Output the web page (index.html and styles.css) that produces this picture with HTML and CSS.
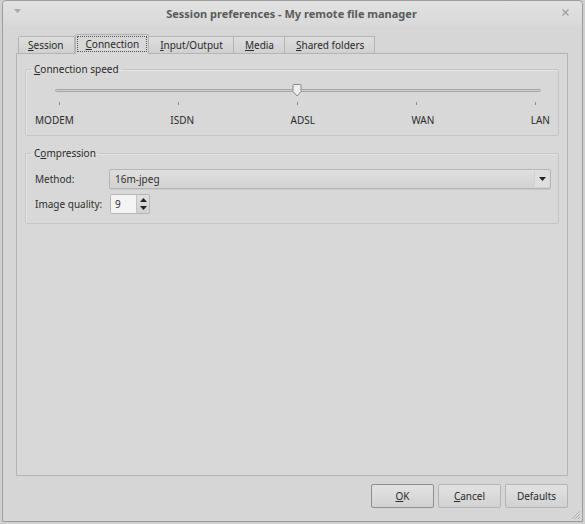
FILE: index.html
```html
<!DOCTYPE html>
<html>
<head>
<meta charset="utf-8">
<link rel="stylesheet" href="styles.css">
</head>
<body>
<div class="window">
  <div class="titlebar">
    <svg class="menu-arrow" width="9" height="6" viewBox="0 0 9 6"><path d="M1 1 L8 1 L4.5 5 Z" fill="#a8a8a8"/></svg>
    <span class="title">Session preferences - My remote file manager</span>
    <svg class="close" width="9" height="9" viewBox="0 0 9 9"><path d="M1.5 1.5 L7.5 7.5 M7.5 1.5 L1.5 7.5" stroke="#a0a0a0" stroke-width="1.4"/></svg>
  </div>
  <div class="content">
    <div class="tabs">
      <div class="tab first"><u>S</u>ession</div>
      <div class="tab active"><span class="focus"><u>C</u>onnection</span></div>
      <div class="tab"><u>I</u>nput/Output</div>
      <div class="tab"><u>M</u>edia</div>
      <div class="tab"><u>S</u>hared folders</div>
    </div>
    <div class="panel">
      <fieldset class="group speed">
        <legend><u>C</u>onnection speed</legend>
        <div class="slider">
          <div class="groove"></div>
          <svg class="handle" width="10" height="13" viewBox="0 0 10 13"><path d="M1 1.5 Q1 0.5 2 0.5 L8 0.5 Q9 0.5 9 1.5 L9 7.5 L5 12 L1 7.5 Z" fill="#eeeeee" stroke="#8a8a8a"/></svg>
        </div>
        <div class="ticks"><i></i><i></i><i></i><i></i><i></i></div>
        <div class="labels"><span>MODEM</span><span>ISDN</span><span>ADSL</span><span>WAN</span><span>LAN</span></div>
      </fieldset>
      <fieldset class="group compression">
        <legend>C<u>o</u>mpression</legend>
        <div class="row">
          <span class="lbl">Method:</span>
          <div class="combo"><span>16m-jpeg</span><span class="drop"><svg width="7" height="4" viewBox="0 0 7 4"><path d="M0 0 L7 0 L3.5 4 Z" fill="#222"/></svg></span></div>
        </div>
        <div class="row">
          <span class="lbl">Image quality:</span>
          <div class="spin"><span class="field">9</span><span class="arrows"><svg width="7" height="4" viewBox="0 0 7 4"><path d="M0 4 L7 4 L3.5 0 Z" fill="#222"/></svg><svg width="7" height="4" viewBox="0 0 7 4"><path d="M0 0 L7 0 L3.5 4 Z" fill="#222"/></svg></span></div>
        </div>
      </fieldset>
    </div>
    <div class="buttons">
      <button class="btn default"><u>O</u>K</button>
      <button class="btn"><u>C</u>ancel</button>
      <button class="btn">Defaults</button>
    </div>
  </div>
  <svg class="grip" width="12" height="12" viewBox="0 0 12 12"><path d="M11 3 L3 11 M11 6 L6 11 M11 9 L9 11" stroke="#b0b0b0" stroke-width="1"/></svg>
</div>
</body>
</html>
```
FILE: styles.css
```css
* { box-sizing: border-box; }
html, body { margin: 0; padding: 0; background: #d0d0d0; }
body {
  font-family: "Noto Sans", "Open Sans", sans-serif;
  font-size: 10px;
  color: #2e2e2e;
  width: 585px;
  height: 524px;
  overflow: hidden;
}
u { text-decoration: underline; text-underline-offset: 1px; }
.window {
  position: relative;
  margin-left: 2px;
  width: 581px;
  height: 522px;
  border: 1px solid #9c9c9c;
  border-radius: 4px 4px 0 0;
  background: #d6d6d6;
  display: flex;
  flex-direction: column;
}
.titlebar {
  height: 24px;
  display: flex;
  align-items: center;
  justify-content: space-between;
  padding: 0 12px 0 10px;
  background: linear-gradient(#e2e2e2, #d9d9d9);
  border-radius: 4px 4px 0 0;
}
.title {
  font-weight: bold;
  font-size: 11px;
  color: #5a5a5a;
}
.menu-arrow { margin-top: -4px; }
.close { margin-top: -2px; }
.content {
  flex: 1;
  display: flex;
  flex-direction: column;
  padding: 9px 14px 13px 13px;
}
.tabs {
  display: flex;
  align-items: flex-end;
  height: 19px;
  padding-left: 2px;
  position: relative;
  z-index: 1;
}
.tab {
  height: 17px;
  padding: 0 10px 0 11px;
  display: flex;
  align-items: center;
  border: 1px solid #b4b4b4;
  border-bottom: none;
  border-left: none;
  background: linear-gradient(#dedede, #d0d0d0);
  line-height: 1;
  color: #2a2a2a;
}
.tab.first { border-left: 1px solid #b4b4b4; border-radius: 2px 0 0 0; padding-left: 9px; }
.tab.active {
  height: 20px;
  margin-bottom: -1px;
  padding: 0 1px;
  border-left: 1px solid #b4b4b4;
  background: #d8d8d8;
  border-radius: 2px 2px 0 0;
}
.focus {
  border: 1px dotted #555;
  padding: 2px 7px 2px 8px;
  margin-top: -1px;
}
.panel {
  flex: 1;
  border: 1px solid #b4b4b4;
  background: #d8d8d8;
  padding: 8px 8px;
  display: flex;
  flex-direction: column;
}
.group {
  margin: 0;
  border: 1px solid #c6c6c6;
  box-shadow: inset 1px 1px 0 #e4e4e4;
  border-radius: 2px;
  padding: 0;
  min-width: 0;
}
.group legend {
  margin-left: 5px;
  padding: 0 3px;
  line-height: 14px;
  color: #2a2a2a;
}
.speed { padding-bottom: 8px; }
.slider {
  position: relative;
  height: 13px;
  margin: 8px 17px 0 29px;
  display: flex;
  align-items: center;
}
.groove {
  width: 100%;
  height: 3px;
  border: 1px solid #a6a6a6;
  border-radius: 2px;
  background: #cfcfcf;
}
.handle {
  position: absolute;
  left: 237px;
  top: 0;
}
.ticks {
  display: flex;
  justify-content: space-between;
  margin: 5px 0 0 33px;
  width: 477px;
  height: 3px;
}
.ticks i { display: block; width: 1px; height: 3px; background: #8c8c8c; }
.labels {
  display: flex;
  justify-content: space-between;
  margin: 9px 8px 0 9px;
  line-height: 13px;
  color: #2a2a2a;
}
.compression {
  margin-top: 10px;
  padding: 0 7px 9px 9px;
}
.compression legend { margin-left: -4px; }
.row {
  display: flex;
  align-items: center;
  height: 20px;
}
.row + .row { margin-top: 5px; }
.compression legend + .row { margin-top: 9px; }
.lbl { width: 74px; flex: none; }
.combo {
  flex: 1;
  height: 20px;
  border: 1px solid #b6b6b6;
  border-radius: 2px;
  background: linear-gradient(#dfdfdf, #d2d2d2);
  box-shadow: 0 1px 0 #c8c8c8;
  display: flex;
  align-items: center;
  justify-content: space-between;
  padding-left: 5px;
}
.drop {
  width: 15px;
  height: 16px;
  margin-right: 1px;
  display: flex;
  align-items: center;
  justify-content: center;
  background: #dedede;
  border-left: 1px solid #d0d0d0;
}
.spin {
  width: 40px;
  height: 20px;
  border: 1px solid #b6b6b6;
  border-radius: 2px;
  display: flex;
  margin-left: 1px;
  background: #d8d8d8;
}
.spin .field {
  flex: 1;
  background: #f4f4f4;
  padding-left: 4px;
  display: flex;
  align-items: center;
}
.spin .arrows {
  width: 13px;
  display: flex;
  flex-direction: column;
  justify-content: space-evenly;
  align-items: center;
  background: linear-gradient(#e0e0e0, #d0d0d0);
  border-left: 1px solid #c4c4c4;
}
.buttons {
  display: flex;
  justify-content: flex-end;
  gap: 4px;
  margin-top: 8px;
}
.btn {
  width: 63px;
  height: 24px;
  font: inherit;
  color: #2a2a2a;
  border: 1px solid #b4b4b4;
  border-radius: 2px;
  background: linear-gradient(#e2e2e2, #d2d2d2);
  padding: 0;
}
.btn.default { border-color: #8e8e8e; }
.grip { position: absolute; right: 1px; bottom: 1px; }
```
